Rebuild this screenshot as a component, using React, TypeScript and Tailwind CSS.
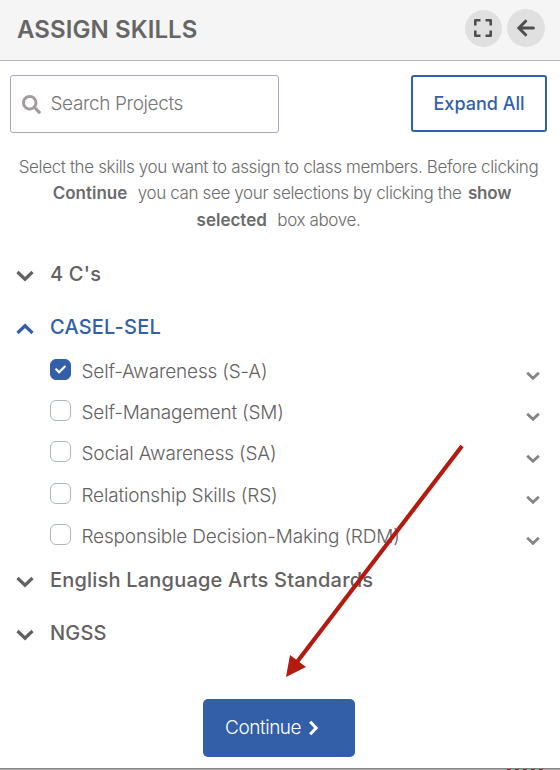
import { FaCheck, FaSearch } from 'react-icons/fa';

const skills = [
  { label: 'Self-Awareness (S-A)', checked: true },
  { label: 'Self-Management (SM)', checked: false },
  { label: 'Social Awareness (SA)', checked: false },
  { label: 'Relationship Skills (RS)', checked: false },
  { label: 'Responsible Decision-Making (RDM)', checked: false },
];

function Chevron({ className, strokeWidth = 3.2 }: { className: string; strokeWidth?: number }) {
  return (
    <svg viewBox="0 0 18 12" fill="none" stroke="currentColor" strokeWidth={strokeWidth} className={className}>
      <path d="M1.5 2 L9 9.2 L16.5 2" />
    </svg>
  );
}

function Group({ title, open = false }: { title: string; open?: boolean }) {
  return (
    <button
      className={`flex h-[53.5px] w-full items-center pl-4 text-left text-[20px] font-medium tracking-[0.2px] ${
        open ? 'text-[#325fa8]' : 'text-[#636161]'
      }`}
    >
      <Chevron className={`mt-1 mr-4 h-3 w-[18px] ${open ? 'rotate-180' : ''}`} />
      <span>{title}</span>
    </button>
  );
}

export default function App() {
  return (
    <div className="relative flex h-[770px] w-[560px] flex-col overflow-hidden bg-white font-['Inter',sans-serif] text-[#636161]">
      {/* Header */}
      <header className="flex h-[61px] shrink-0 items-center border-b border-[#b9b9b9] bg-[#f5f5f5] pr-[15px] pb-1 pl-[17px]">
        <h1 className="flex-1 pt-[3px] text-[24px] font-semibold tracking-[0.1px] text-[#666]">ASSIGN SKILLS</h1>
        <button className="mr-[5px] flex size-[37px] items-center justify-center rounded-full bg-[#e0e0e0] pr-px text-[#4f4f4f]">
          <svg
            viewBox="0 0 18 18"
            fill="none"
            stroke="currentColor"
            strokeWidth="2.6"
            strokeLinejoin="round"
            className="size-[18px]"
          >
            <path d="M1.3 6.5V1.3H6.5M11.5 1.3h5.2V6.5M16.7 11.5v5.2H11.5M6.5 16.7H1.3V11.5" />
          </svg>
        </button>
        <button className="flex size-[38px] items-center justify-center rounded-full bg-[#e0e0e0] text-[#4f4f4f]">
          <svg
            viewBox="0 0 18 18"
            fill="none"
            stroke="currentColor"
            strokeWidth="3"
            strokeLinecap="round"
            className="size-[18px]"
          >
            <path d="M2.3 9H16.4M8.6 2.2L1.9 9L8.6 15.8" />
          </svg>
        </button>
      </header>

      {/* Search */}
      <div className="flex justify-between pt-3.5 pr-[13px] pl-2.5">
        <div className="flex h-[58px] w-[269px] items-center rounded-[3px] border border-[#aaa6bf] pl-[11px]">
          <FaSearch className="mr-[9.5px] size-[19px] text-[#a39c9c]" />
          <input
            placeholder="Search Projects"
            className="w-[200px] text-[19px] font-light tracking-[-0.4px] outline-none placeholder:text-[#757575]"
          />
        </div>
        <button className="h-[57px] w-[136px] rounded-[3px] border-2 border-[#325fa8] text-[18px] font-medium text-[#325fa8]">
          Expand All
        </button>
      </div>

      <p className="mt-[21px] pr-[3px] text-center text-[17px] leading-[26.4px] font-light tracking-[-0.37px] text-[#6b6b6b]">
        Select the skills you want to assign to class members. Before clicking
        <br />
        <b className="mr-1.5 ml-[7px] font-semibold tracking-normal">Continue</b> you can see your selections by clicking
        the <b className="ml-0.5 font-semibold tracking-[-0.2px]">show</b>
        <br />
        <b className="mr-1.5 font-semibold tracking-normal">selected</b> box above.
      </p>

      {/* Skill groups */}
      <div className="mt-3.5">
        <Group title="4 C's" />
        <Group title="CASEL-SEL" open />
        <ul className="-mt-[3px] -mb-[4.5px] pr-5 pl-[50px]">
          {skills.map((skill) => (
            <li key={skill.label} className="flex h-[41.3px] items-center">
              <span
                className={`mr-[10.5px] mb-[5px] flex size-[21px] items-center justify-center rounded-[6px] border ${
                  skill.checked ? 'border-[#325fa8] bg-[#325fa8]' : 'border-[#adb5bd]'
                }`}
              >
                {skill.checked && <FaCheck className="size-[11px] text-white" />}
              </span>
              <span className="flex-1 text-[19px] font-light tracking-[-0.18px]">{skill.label}</span>
              <Chevron className="mt-2 h-[9.5px] w-3.5 text-[#858585]" strokeWidth={3.6} />
            </li>
          ))}
        </ul>
        <Group title="English Language Arts Standards" />
        <Group title="NGSS" />
      </div>

      <button className="mt-[39px] mr-0.5 flex h-[58px] w-[152px] shrink-0 items-center self-center rounded-[5px] bg-[#325fa8] pl-[22px] text-[19px] font-light tracking-[-0.45px] text-white">
        Continue
        <Chevron className="ml-[5px] h-2.5 w-[15px] -rotate-90" strokeWidth={3.6} />
      </button>

      {/* Top edge of the panel below */}
      <div className="mt-auto h-px shrink-0 bg-[#858585]" />
      <div className="flex h-px shrink-0 justify-end gap-1 bg-[#a8a8a8] pr-[17px]">
        {[0, 1, 2, 3, 4].map((i) => (
          <span key={i} className="h-px w-1 bg-[#a01030]" />
        ))}
      </div>

      {/* Arrow pointing at the continue button */}
      <svg viewBox="0 0 560 770" className="pointer-events-none absolute inset-0 h-[770px] w-[560px]">
        <path d="M462 446 L297 662" stroke="#b31b11" strokeWidth="4.2" />
        <path d="M286 677 L290 655 L306 667 Z" fill="#b31b11" />
      </svg>
    </div>
  );
}
